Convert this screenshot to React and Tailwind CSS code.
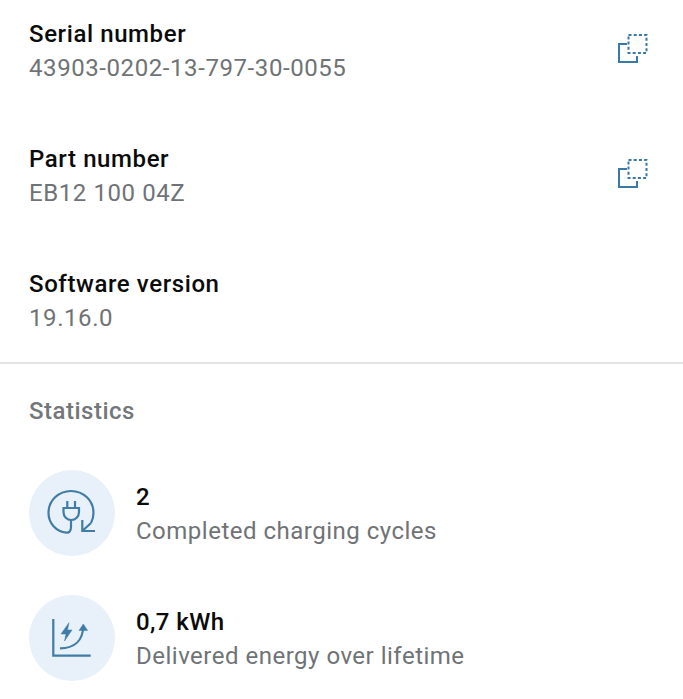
const font = { fontFamily: "Roboto, sans-serif" };

function CopyIcon() {
  return (
    <svg width="32" height="34" viewBox="0 0 32 34" fill="none" className="block">
      <path d="M10 12H2V30H20V24" stroke="#3a78a6" strokeWidth="2" />
      <rect x="11.5" y="3" width="18" height="18" stroke="#3a78a6" strokeWidth="2" strokeDasharray="3 2.2" />
    </svg>
  );
}

function InfoRow({ title, value, copy }) {
  return (
    <div className="flex h-[125px] pl-[29px] pr-[34px]">
      <div className="flex-1 pt-[17px]">
        <div className="text-[24px] leading-[34px] tracking-[0.6px] text-[#0b0b0b] font-medium">{title}</div>
        <div className="text-[24px] leading-[34px] tracking-[0.58px] text-[#6f7376]">{value}</div>
      </div>
      {copy && <div className="pt-[32px]"><CopyIcon /></div>}
    </div>
  );
}

function PlugIcon() {
  return (
    <svg width="50" height="50" viewBox="0 0 50 50" fill="none" stroke="#3f7ca6" strokeWidth="2.2">
      <path d="M24 32V39C24 43 22 45 19.5 44.6C9 43.5 1.5 35 1.5 25C1.5 12.5 11.5 3 24 3C36.5 3 46.5 12.5 46.5 25C46.5 29 45.5 32 44 35" />
      <path d="M20.3 13V19M28 13V19" />
      <path d="M16.5 20H32V24C32 28.5 28.5 32 24.2 32C20 32 16.5 28.5 16.5 24Z" />
      <path d="M35.3 32V43H48M35.3 43L44 35" />
    </svg>
  );
}

function ChartIcon() {
  return (
    <svg width="50" height="50" viewBox="0 0 50 50" fill="none" stroke="#3f7ca6" strokeWidth="2.2">
      <path d="M6.3 6V42.7H43.7" />
      <path d="M13 35.3C27 35.3 36 28 36.3 13" />
      <path d="M36.3 11L32 17.5H40.6Z" fill="#3f7ca6" strokeWidth="0.5" />
      <path d="M22 9.7L14 21H19L17.5 28L25 17H20.5L22 9.7Z" fill="#3f7ca6" strokeWidth="0.5" />
    </svg>
  );
}

function StatRow({ icon, value, label }) {
  return (
    <div className="flex h-[86px] gap-[21px]">
      <div className="w-[86px] h-[86px] rounded-full bg-[#e8f0fa] flex items-center justify-center shrink-0">{icon}</div>
      <div className="pt-[10px]">
        <div className="text-[24px] leading-[34px] tracking-[0.4px] text-[#0b0b0b] font-medium">{value}</div>
        <div className="text-[24px] leading-[34px] tracking-[0.5px] text-[#6f7376]">{label}</div>
      </div>
    </div>
  );
}

export default function App() {
  return (
    <div style={font} className="w-[683px] h-[699px] bg-white overflow-hidden">
      <InfoRow title="Serial number" value="43903-0202-13-797-30-0055" copy />
      <InfoRow title="Part number" value="EB12 100 04Z" copy />
      <InfoRow title="Software version" value="19.16.0" />
      <div className="h-[2px] bg-[#e3e4e5] -mt-[13px]" />
      <div className="pl-[29px] pt-[30px] text-[24px] leading-[34px] tracking-[0.5px] text-[#73777a] font-medium">Statistics</div>
      <div className="pl-[29px] pt-[42px] flex flex-col gap-[39px]">
        <StatRow icon={<PlugIcon />} value="2" label="Completed charging cycles" />
        <StatRow icon={<ChartIcon />} value="0,7 kWh" label="Delivered energy over lifetime" />
      </div>
    </div>
  );
}
